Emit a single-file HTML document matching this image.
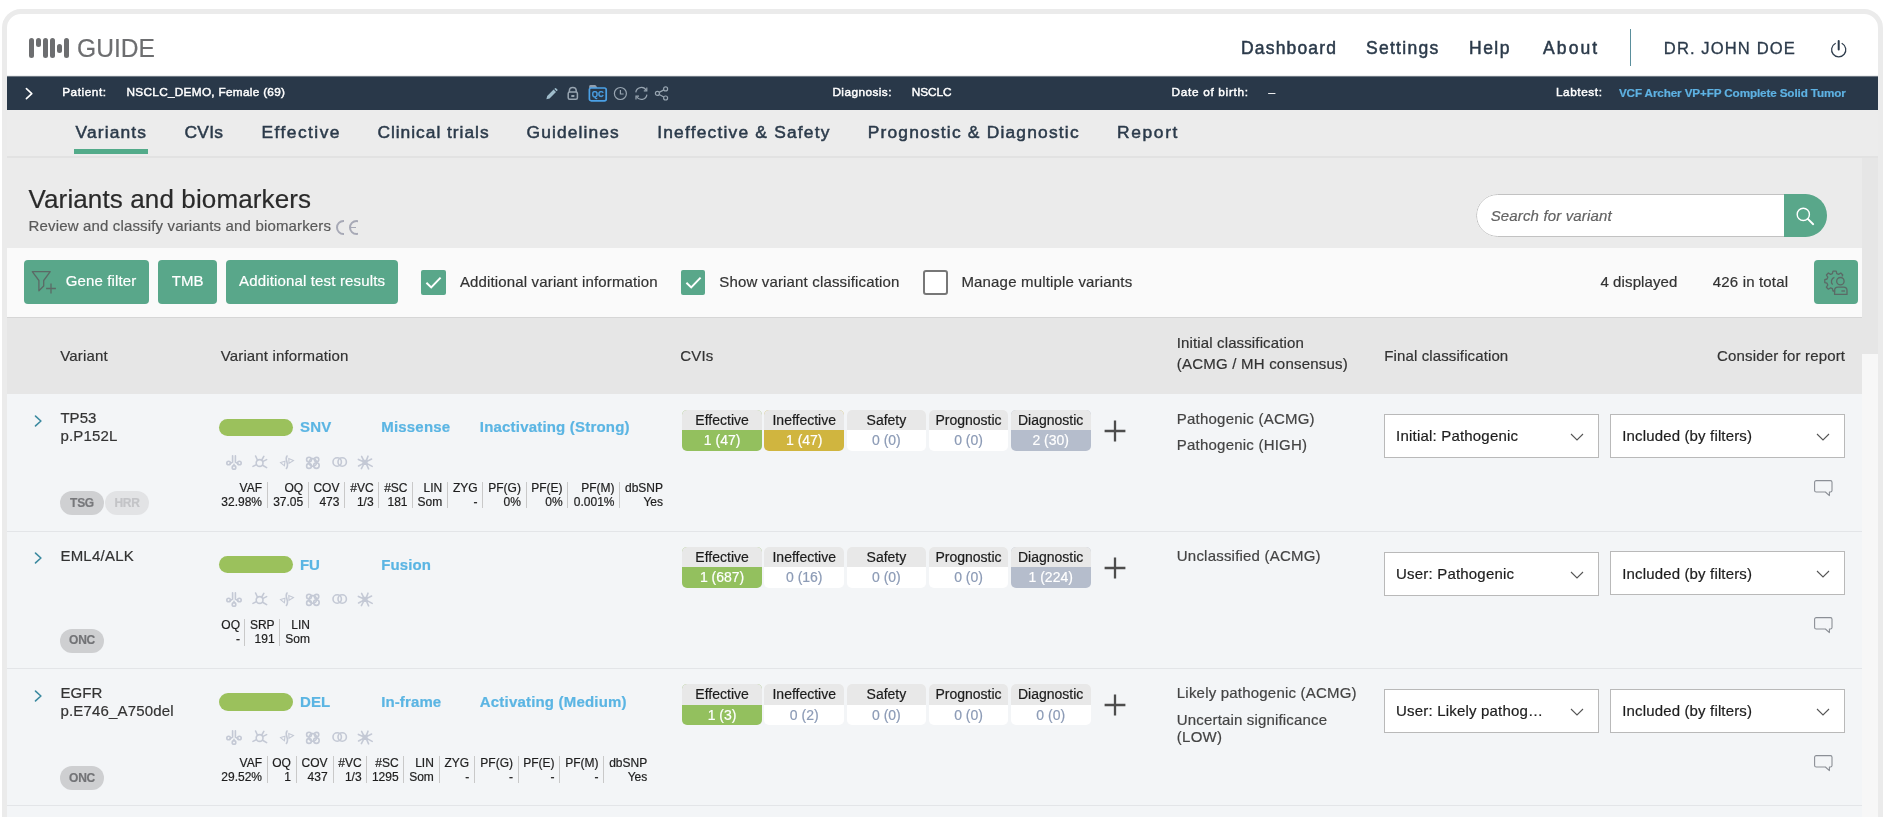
<!DOCTYPE html><html><head><meta charset="utf-8"><title>GUIDE - Variants and biomarkers</title><style>
html,body{margin:0;padding:0;}body{width:1897px;height:817px;overflow:hidden;background:#fff;position:relative;font-family:"Liberation Sans",sans-serif;}
.t{position:absolute;white-space:nowrap;line-height:1;}#w{position:absolute;left:0;top:0;width:1897px;height:817px;overflow:hidden;will-change:transform;}
svg{position:absolute;overflow:visible;}
</style></head><body><div id="w">
<div style="position:absolute;left:2px;top:9px;width:1871px;height:900px;border:5px solid #ebebeb;border-radius:19px;background:#fff;"></div>
<div style="position:absolute;left:7px;top:76px;width:1871px;height:741px;background:#ececec;"></div>
<div style="position:absolute;left:7px;top:76px;width:1871px;height:33.5px;background:#293849;"></div>
<div style="position:absolute;left:7px;top:74.5px;width:1871px;height:2px;background:linear-gradient(#fff,#8a929b);opacity:.55"></div>
<div style="position:absolute;left:7px;top:155.5px;width:1871px;height:2.5px;background:#e2e2e2;"></div>
<div style="position:absolute;left:7px;top:157.5px;width:1855px;height:659.5px;background:#ebebeb;"></div>
<div style="position:absolute;left:1862px;top:157.5px;width:16px;height:659.5px;background:#f7f7f7;"></div>
<div style="position:absolute;left:1862px;top:157.5px;width:16px;height:196.5px;background:#e6e6e6;"></div>
<div style="position:absolute;left:7px;top:248px;width:1855px;height:69px;background:#fafafa;"></div>
<div style="position:absolute;left:7px;top:317px;width:1855px;height:500px;background:#f3f5f7;"></div>
<div style="position:absolute;left:7px;top:317px;width:1855px;height:76.6px;background:#e6e6e6;"></div>
<div style="position:absolute;left:7px;top:316.8px;width:1855px;height:1.4px;background:#d6d6d6;"></div>
<div style="position:absolute;left:7px;top:531px;width:1855px;height:1px;background:#e3e5e8;"></div>
<div style="position:absolute;left:7px;top:668px;width:1855px;height:1px;background:#e3e5e8;"></div>
<div style="position:absolute;left:7px;top:805px;width:1855px;height:1px;background:#e3e5e8;"></div>
<div style="position:absolute;left:29px;top:38.2px;width:5px;height:19.8px;background:#6d6e70;border-radius:2.6px;"></div>
<div style="position:absolute;left:35.8px;top:38.2px;width:5.2px;height:9.2px;background:#6d6e70;border-radius:2.6px;"></div>
<div style="position:absolute;left:43px;top:38.2px;width:5px;height:19.8px;background:#6d6e70;border-radius:2.6px;"></div>
<div style="position:absolute;left:50px;top:38.2px;width:5px;height:19.8px;background:#6d6e70;border-radius:2.6px;"></div>
<div style="position:absolute;left:57px;top:43.7px;width:5px;height:9.2px;background:#6d6e70;border-radius:2.6px;"></div>
<div style="position:absolute;left:63.9px;top:38.2px;width:5.1px;height:19.8px;background:#6d6e70;border-radius:2.6px;"></div>
<div style="position:absolute;left:1630px;top:29.4px;width:1.3px;height:36.9px;background:#5a8f9c;"></div>
<svg style="left:1828px;top:38px" width="22" height="22" viewBox="0 0 22 22"><path d="M7.3 5.5 A7.1 7.1 0 1 0 14.1 5.5" fill="none" stroke="#2f3d4d" stroke-width="1.25" stroke-linecap="round"/><path d="M10.7 3 V11.4" stroke="#2b3a4a" stroke-width="2" stroke-linecap="round"/></svg>
<svg style="left:22.7px;top:85.4px" width="14" height="16" viewBox="0 0 14 16"><path d="M3.4 3.6 L8.8 8.6 L3.4 13.6" fill="none" stroke="#fff" stroke-width="1.6" stroke-linecap="round" stroke-linejoin="round"/></svg>
<svg style="left:545px;top:86.6px" width="14" height="14" viewBox="0 0 14 14"><path d="M1.4 12.2 L2.2 9 L8.6 2.6 L11 5 L4.6 11.4 Z" fill="#9fbccb"/><path d="M9.3 1.9 L10 1.2 Q10.5 0.8 11 1.2 L12.4 2.6 Q12.8 3.1 12.4 3.6 L11.7 4.3 Z" fill="#9fbccb"/></svg>
<svg style="left:566px;top:86px" width="14" height="15" viewBox="0 0 14 15"><rect x="2.2" y="6" width="9.2" height="7.2" rx="1.5" fill="none" stroke="#98a5b1" stroke-width="1.5"/><path d="M3.4 6 V4.6 A3.4 3.2 0 0 1 10.2 4.6 V6" fill="none" stroke="#98a5b1" stroke-width="1.5"/><rect x="5.2" y="9" width="3.2" height="2" rx="0.4" fill="#98a5b1"/></svg>
<svg style="left:588px;top:84px" width="20" height="19" viewBox="0 0 20 19"><path d="M1.2 4.2 V2.4 Q1.2 1 2.6 1 H6.8 Q7.6 1 8 1.6 L9.6 4.2 Z" fill="#929eac"/><rect x="1.4" y="4" width="16.8" height="12.8" rx="1.8" fill="#293849" stroke="#4ba1e6" stroke-width="1.7"/><text x="9.8" y="13.4" font-family="Liberation Sans, sans-serif" font-weight="700" font-size="9.4" fill="#4ba1e6" stroke="#4ba1e6" stroke-width="0.25" text-anchor="middle" textLength="12" lengthAdjust="spacingAndGlyphs">QC</text></svg>
<svg style="left:613px;top:86px" width="15" height="15" viewBox="0 0 15 15"><circle cx="7.4" cy="7.5" r="6" fill="none" stroke="#98a5b1" stroke-width="1.2"/><path d="M7.4 4 V8 H10.6" fill="none" stroke="#98a5b1" stroke-width="1.2"/></svg>
<svg style="left:634px;top:86px" width="15" height="15" viewBox="0 0 15 15"><path d="M1.8 6.4 A5.6 5.6 0 0 1 12.2 4.2" fill="none" stroke="#98a5b1" stroke-width="1.2"/><path d="M12.9 8.6 A5.6 5.6 0 0 1 2.6 10.8" fill="none" stroke="#98a5b1" stroke-width="1.2"/><path d="M12.8 1.6 V4.8 H9.8" fill="none" stroke="#98a5b1" stroke-width="1.2"/><path d="M2 13.4 V10.2 H5" fill="none" stroke="#98a5b1" stroke-width="1.2"/></svg>
<svg style="left:654px;top:86px" width="16" height="15" viewBox="0 0 16 15"><circle cx="3.4" cy="7.4" r="2" fill="none" stroke="#98a5b1" stroke-width="1.2"/><circle cx="11.6" cy="2.9" r="2" fill="none" stroke="#98a5b1" stroke-width="1.2"/><circle cx="11.6" cy="12" r="2" fill="none" stroke="#98a5b1" stroke-width="1.2"/><path d="M5.2 6.4 L9.8 3.9 M5.2 8.4 L9.8 11" stroke="#98a5b1" stroke-width="1.2"/></svg>
<div style="position:absolute;left:73.8px;top:149px;width:73.8px;height:4.8px;background:#53ab8a;"></div>
<div style="position:absolute;left:336px;top:220px;width:8.2px;height:15px;overflow:hidden"><div style="box-sizing:border-box;width:15px;height:15px;border:2px solid #a7a9b6;border-radius:50%"></div></div>
<div style="position:absolute;left:349.4px;top:220px;width:8.2px;height:15px;overflow:hidden"><div style="box-sizing:border-box;width:15px;height:15px;border:2px solid #a7a9b6;border-radius:50%"></div><div style="position:absolute;left:1px;top:6.7px;width:6px;height:1.6px;background:#a7a9b6"></div></div>
<div style="position:absolute;left:1475.7px;top:194.3px;width:351.4px;height:43px;border-radius:21.5px;background:#fff;overflow:hidden"><div style="position:absolute;box-sizing:border-box;left:0;top:0;width:100%;height:100%;border:1px solid #c2c2c2;border-radius:21.5px"></div><div style="position:absolute;right:0;top:0;width:42.8px;height:43px;background:#59a78a"></div></div>
<svg style="left:1794px;top:205px" width="22" height="22" viewBox="0 0 22 22"><circle cx="9.3" cy="9.4" r="6.1" fill="none" stroke="#fff" stroke-width="1.4"/><path d="M13.8 13.9 L19.2 19.2" stroke="#fff" stroke-width="1.9" stroke-linecap="round"/></svg>
<div style="position:absolute;left:23.6px;top:260.4px;width:125.9px;height:43.8px;background:#59a78a;border-radius:4px;"></div>
<div style="position:absolute;left:158px;top:260.4px;width:59px;height:43.8px;background:#59a78a;border-radius:4px;"></div>
<div style="position:absolute;left:225.5px;top:260.4px;width:172.9px;height:43.8px;background:#59a78a;border-radius:4px;"></div>
<svg style="left:30px;top:269px" width="26" height="26" viewBox="0 0 26 26"><path d="M2.3 2.7 H20.2 L13.7 11.5 V17 L8.9 21.7 V11.5 Z" fill="none" stroke="#5b6a66" stroke-width="1.3" stroke-linejoin="round"/><path d="M21 14.6 V24.4 M16.1 19.5 H25.9" stroke="#5b6a66" stroke-width="1.3"/></svg>
<div style="position:absolute;left:421px;top:270px;width:24.5px;height:24.5px;background:#59a78a;border-radius:2px"></div>
<svg style="left:421px;top:270px" width="25" height="25" viewBox="0 0 25 25"><path d="M5.4 12.8 L10.2 17.4 L19.6 7.6" fill="none" stroke="#fff" stroke-width="2"/></svg>
<div style="position:absolute;left:680.9px;top:270px;width:24.5px;height:24.5px;background:#59a78a;border-radius:2px"></div>
<svg style="left:680.9px;top:270px" width="25" height="25" viewBox="0 0 25 25"><path d="M5.4 12.8 L10.2 17.4 L19.6 7.6" fill="none" stroke="#fff" stroke-width="2"/></svg>
<div style="position:absolute;box-sizing:border-box;left:923px;top:270px;width:24.5px;height:24.5px;background:#fff;border:2px solid #777;border-radius:3px"></div>
<div style="position:absolute;left:1814.2px;top:260.3px;width:44.0px;height:43.8px;background:#59a78a;border-radius:4px;"></div>
<svg style="left:1823px;top:268.5px" width="28" height="28" viewBox="0 0 28 28"><g fill="none" stroke="#5b6a66" stroke-width="1.3" stroke-linejoin="round"><path d="M12.2 22 H10 L9.4 19.6 L7.6 18.8 L5.4 20.2 L3.4 18.2 L4.8 16 L4 14.2 L1.8 13.6 V10.6 L4 10 L4.8 8.2 L3.4 6 L5.4 4 L7.6 5.4 L9.4 4.6 L10 2.2 H13.2 L13.8 4.6 L15.6 5.4 L17.8 4 L19.8 6 L18.9 7.4"/><path d="M9.6 15.6 A4.4 4.4 0 0 1 11.4 8.4"/><circle cx="17.4" cy="12.2" r="3.7"/><path d="M11.6 25.4 V21.6 A3.4 3.4 0 0 1 15 18.2 H20.6 A3.4 3.4 0 0 1 24 21.6 V25.4 Z"/><path d="M18.4 22 H22"/></g></svg>
<svg style="left:32px;top:413.0px" width="12" height="16" viewBox="0 0 12 16"><path d="M3.5 3.1 L8.9 8 L3.5 12.9" fill="none" stroke="#3c8aa0" stroke-width="1.6" stroke-linecap="round" stroke-linejoin="round"/></svg>
<div style="position:absolute;left:60px;top:491.3px;width:44px;height:24px;border-radius:12px;background:#cfd0d2"></div>
<div style="position:absolute;left:105px;top:491.3px;width:44px;height:24px;border-radius:12px;background:#e2e3e5"></div>
<div style="position:absolute;left:219.2px;top:418.6px;width:73.6px;height:17.6px;background:#9bc15c;border-radius:9px;"></div>
<svg style="left:226px;top:455.0px" width="148" height="16" viewBox="0 0 148 16"><g fill="none" stroke="#c4c9d5" stroke-width="1.6" stroke-linecap="round"><path d="M6.6 0.8 V7 L4.2 8.6 M9.4 0.8 V7 L11.8 8.6 M8 9.4 V10.6"/><circle cx="2.6" cy="8" r="1.8"/><circle cx="13.4" cy="8" r="1.8"/><circle cx="8" cy="12.4" r="1.8"/><circle cx="33.6" cy="8" r="3.4"/><path d="M31.4 5 L29.6 1 M35.8 5 L37.8 1.4 M30.4 9.6 L27 11.4 M36.6 10.2 L40.6 12.6 M37 6.4 L40.6 4.6"/><path d="M61 1 C58 5 64 9 60.4 13.4"/><path d="M54.6 7.6 L59 6.2 L58.4 10.8 Z M67.4 5.6 L62.8 3.6 L63 8.2 Z" stroke-width="1.1"/><circle cx="86.8" cy="7.4" r="3.8"/><circle cx="83" cy="4.6" r="2.4"/><circle cx="90.6" cy="4.6" r="2.2"/><circle cx="83" cy="11" r="2.4"/><circle cx="90.4" cy="10.6" r="2.8"/><circle cx="111.2" cy="7" r="4.2"/><circle cx="116.2" cy="7" r="4.2"/><path d="M135.6 1.4 L137.6 5.4 M142 1.2 L140.4 5.4 M132.4 4.4 L137 6.4 M145.6 4 L141 6.4 M132.6 11 L137 8.6 M146.2 11.4 L141 8.6 M135.4 13.6 L137.8 9 M142.6 13.8 L140.4 9"/><rect x="137.2" y="5.6" width="3.6" height="3.6" fill="#c4c9d5"/></g></svg>
<div style="position:absolute;left:267.1px;top:481.8px;width:1.0px;height:26.6px;background:#c9c9c9;"></div>
<div style="position:absolute;left:307.8px;top:481.8px;width:1.0px;height:26.6px;background:#c9c9c9;"></div>
<div style="position:absolute;left:344.2px;top:481.8px;width:1.0px;height:26.6px;background:#c9c9c9;"></div>
<div style="position:absolute;left:377.9px;top:481.8px;width:1.0px;height:26.6px;background:#c9c9c9;"></div>
<div style="position:absolute;left:412.0px;top:481.8px;width:1.0px;height:26.6px;background:#c9c9c9;"></div>
<div style="position:absolute;left:447.0px;top:481.8px;width:1.0px;height:26.6px;background:#c9c9c9;"></div>
<div style="position:absolute;left:481.9px;top:481.8px;width:1.0px;height:26.6px;background:#c9c9c9;"></div>
<div style="position:absolute;left:525.5px;top:481.8px;width:1.0px;height:26.6px;background:#c9c9c9;"></div>
<div style="position:absolute;left:567.2px;top:481.8px;width:1.0px;height:26.6px;background:#c9c9c9;"></div>
<div style="position:absolute;left:619.0px;top:481.8px;width:1.0px;height:26.6px;background:#c9c9c9;"></div>
<div style="position:absolute;left:682.2px;top:409.8px;width:79.8px;height:41px;border-radius:5px;overflow:hidden;background:#93c05e"><div style="height:20.4px;background:#e8e8e8"></div></div>
<div style="position:absolute;left:764.35px;top:409.8px;width:79.8px;height:41px;border-radius:5px;overflow:hidden;background:#d0b53f"><div style="height:20.4px;background:#e8e8e8"></div></div>
<div style="position:absolute;left:846.5px;top:409.8px;width:79.8px;height:41px;border-radius:5px;overflow:hidden;background:#ffffff"><div style="height:20.4px;background:#e8e8e8"></div></div>
<div style="position:absolute;left:928.65px;top:409.8px;width:79.8px;height:41px;border-radius:5px;overflow:hidden;background:#ffffff"><div style="height:20.4px;background:#e8e8e8"></div></div>
<div style="position:absolute;left:1010.8px;top:409.8px;width:79.8px;height:41px;border-radius:5px;overflow:hidden;background:#b5bdcc"><div style="height:20.4px;background:#e8e8e8"></div></div>
<svg style="left:1104px;top:419.5px" width="22" height="22" viewBox="0 0 22 22"><path d="M11 0.6 V21.4 M0.6 11 H21.4" stroke="#4d4d4d" stroke-width="2.3"/></svg>
<div style="position:absolute;box-sizing:border-box;left:1383.9px;top:414px;width:215.5px;height:44px;background:#fff;border:1px solid #b9b9b9"></div>
<svg style="left:1569.9px;top:432.4px" width="14" height="10" viewBox="0 0 14 10"><path d="M1 2 L7 8 L13 2" fill="none" stroke="#555" stroke-width="1.1"/></svg>
<div style="position:absolute;box-sizing:border-box;left:1610px;top:414px;width:235px;height:44px;background:#fff;border:1px solid #b9b9b9"></div>
<svg style="left:1815.5px;top:432.4px" width="14" height="10" viewBox="0 0 14 10"><path d="M1 2 L7 8 L13 2" fill="none" stroke="#555" stroke-width="1.1"/></svg>
<svg style="left:1813px;top:479.0px" width="21" height="19" viewBox="0 0 21 19"><path d="M3.2 1.6 H17.4 A1.6 1.6 0 0 1 19 3.2 V11.4 A1.6 1.6 0 0 1 17.4 13 H16.4 V16.6 L12.4 13 H3.2 A1.6 1.6 0 0 1 1.6 11.4 V3.2 A1.6 1.6 0 0 1 3.2 1.6 Z" fill="none" stroke="#8b8f96" stroke-width="1.1" stroke-linejoin="round"/></svg>
<svg style="left:32px;top:550.3px" width="12" height="16" viewBox="0 0 12 16"><path d="M3.5 3.1 L8.9 8 L3.5 12.9" fill="none" stroke="#3c8aa0" stroke-width="1.6" stroke-linecap="round" stroke-linejoin="round"/></svg>
<div style="position:absolute;left:60px;top:628.5999999999999px;width:44px;height:24px;border-radius:12px;background:#cecfd1"></div>
<div style="position:absolute;left:219.2px;top:555.9px;width:73.6px;height:17.6px;background:#9bc15c;border-radius:9px;"></div>
<svg style="left:226px;top:592.3px" width="148" height="16" viewBox="0 0 148 16"><g fill="none" stroke="#c4c9d5" stroke-width="1.6" stroke-linecap="round"><path d="M6.6 0.8 V7 L4.2 8.6 M9.4 0.8 V7 L11.8 8.6 M8 9.4 V10.6"/><circle cx="2.6" cy="8" r="1.8"/><circle cx="13.4" cy="8" r="1.8"/><circle cx="8" cy="12.4" r="1.8"/><circle cx="33.6" cy="8" r="3.4"/><path d="M31.4 5 L29.6 1 M35.8 5 L37.8 1.4 M30.4 9.6 L27 11.4 M36.6 10.2 L40.6 12.6 M37 6.4 L40.6 4.6"/><path d="M61 1 C58 5 64 9 60.4 13.4"/><path d="M54.6 7.6 L59 6.2 L58.4 10.8 Z M67.4 5.6 L62.8 3.6 L63 8.2 Z" stroke-width="1.1"/><circle cx="86.8" cy="7.4" r="3.8"/><circle cx="83" cy="4.6" r="2.4"/><circle cx="90.6" cy="4.6" r="2.2"/><circle cx="83" cy="11" r="2.4"/><circle cx="90.4" cy="10.6" r="2.8"/><circle cx="111.2" cy="7" r="4.2"/><circle cx="116.2" cy="7" r="4.2"/><path d="M135.6 1.4 L137.6 5.4 M142 1.2 L140.4 5.4 M132.4 4.4 L137 6.4 M145.6 4 L141 6.4 M132.6 11 L137 8.6 M146.2 11.4 L141 8.6 M135.4 13.6 L137.8 9 M142.6 13.8 L140.4 9"/><rect x="137.2" y="5.6" width="3.6" height="3.6" fill="#c4c9d5"/></g></svg>
<div style="position:absolute;left:244.3px;top:619.0999999999999px;width:1.0px;height:26.6px;background:#c9c9c9;"></div>
<div style="position:absolute;left:279.3px;top:619.0999999999999px;width:1.0px;height:26.6px;background:#c9c9c9;"></div>
<div style="position:absolute;left:682.2px;top:547.0999999999999px;width:79.8px;height:41px;border-radius:5px;overflow:hidden;background:#93c05e"><div style="height:20.4px;background:#e8e8e8"></div></div>
<div style="position:absolute;left:764.35px;top:547.0999999999999px;width:79.8px;height:41px;border-radius:5px;overflow:hidden;background:#ffffff"><div style="height:20.4px;background:#e8e8e8"></div></div>
<div style="position:absolute;left:846.5px;top:547.0999999999999px;width:79.8px;height:41px;border-radius:5px;overflow:hidden;background:#ffffff"><div style="height:20.4px;background:#e8e8e8"></div></div>
<div style="position:absolute;left:928.65px;top:547.0999999999999px;width:79.8px;height:41px;border-radius:5px;overflow:hidden;background:#ffffff"><div style="height:20.4px;background:#e8e8e8"></div></div>
<div style="position:absolute;left:1010.8px;top:547.0999999999999px;width:79.8px;height:41px;border-radius:5px;overflow:hidden;background:#b5bdcc"><div style="height:20.4px;background:#e8e8e8"></div></div>
<svg style="left:1104px;top:556.8px" width="22" height="22" viewBox="0 0 22 22"><path d="M11 0.6 V21.4 M0.6 11 H21.4" stroke="#4d4d4d" stroke-width="2.3"/></svg>
<div style="position:absolute;box-sizing:border-box;left:1383.9px;top:552px;width:215.5px;height:44px;background:#fff;border:1px solid #b9b9b9"></div>
<svg style="left:1569.9px;top:570.4px" width="14" height="10" viewBox="0 0 14 10"><path d="M1 2 L7 8 L13 2" fill="none" stroke="#555" stroke-width="1.1"/></svg>
<div style="position:absolute;box-sizing:border-box;left:1610px;top:551px;width:235px;height:44px;background:#fff;border:1px solid #b9b9b9"></div>
<svg style="left:1815.5px;top:569.4px" width="14" height="10" viewBox="0 0 14 10"><path d="M1 2 L7 8 L13 2" fill="none" stroke="#555" stroke-width="1.1"/></svg>
<svg style="left:1813px;top:616.3px" width="21" height="19" viewBox="0 0 21 19"><path d="M3.2 1.6 H17.4 A1.6 1.6 0 0 1 19 3.2 V11.4 A1.6 1.6 0 0 1 17.4 13 H16.4 V16.6 L12.4 13 H3.2 A1.6 1.6 0 0 1 1.6 11.4 V3.2 A1.6 1.6 0 0 1 3.2 1.6 Z" fill="none" stroke="#8b8f96" stroke-width="1.1" stroke-linejoin="round"/></svg>
<svg style="left:32px;top:687.6px" width="12" height="16" viewBox="0 0 12 16"><path d="M3.5 3.1 L8.9 8 L3.5 12.9" fill="none" stroke="#3c8aa0" stroke-width="1.6" stroke-linecap="round" stroke-linejoin="round"/></svg>
<div style="position:absolute;left:60px;top:765.9000000000001px;width:44px;height:24px;border-radius:12px;background:#cecfd1"></div>
<div style="position:absolute;left:219.2px;top:693.2px;width:73.6px;height:17.6px;background:#9bc15c;border-radius:9px;"></div>
<svg style="left:226px;top:729.6px" width="148" height="16" viewBox="0 0 148 16"><g fill="none" stroke="#c4c9d5" stroke-width="1.6" stroke-linecap="round"><path d="M6.6 0.8 V7 L4.2 8.6 M9.4 0.8 V7 L11.8 8.6 M8 9.4 V10.6"/><circle cx="2.6" cy="8" r="1.8"/><circle cx="13.4" cy="8" r="1.8"/><circle cx="8" cy="12.4" r="1.8"/><circle cx="33.6" cy="8" r="3.4"/><path d="M31.4 5 L29.6 1 M35.8 5 L37.8 1.4 M30.4 9.6 L27 11.4 M36.6 10.2 L40.6 12.6 M37 6.4 L40.6 4.6"/><path d="M61 1 C58 5 64 9 60.4 13.4"/><path d="M54.6 7.6 L59 6.2 L58.4 10.8 Z M67.4 5.6 L62.8 3.6 L63 8.2 Z" stroke-width="1.1"/><circle cx="86.8" cy="7.4" r="3.8"/><circle cx="83" cy="4.6" r="2.4"/><circle cx="90.6" cy="4.6" r="2.2"/><circle cx="83" cy="11" r="2.4"/><circle cx="90.4" cy="10.6" r="2.8"/><circle cx="111.2" cy="7" r="4.2"/><circle cx="116.2" cy="7" r="4.2"/><path d="M135.6 1.4 L137.6 5.4 M142 1.2 L140.4 5.4 M132.4 4.4 L137 6.4 M145.6 4 L141 6.4 M132.6 11 L137 8.6 M146.2 11.4 L141 8.6 M135.4 13.6 L137.8 9 M142.6 13.8 L140.4 9"/><rect x="137.2" y="5.6" width="3.6" height="3.6" fill="#c4c9d5"/></g></svg>
<div style="position:absolute;left:267.1px;top:756.4000000000001px;width:1.0px;height:26.6px;background:#c9c9c9;"></div>
<div style="position:absolute;left:295.5px;top:756.4000000000001px;width:1.0px;height:26.6px;background:#c9c9c9;"></div>
<div style="position:absolute;left:332.5px;top:756.4000000000001px;width:1.0px;height:26.6px;background:#c9c9c9;"></div>
<div style="position:absolute;left:365.9px;top:756.4000000000001px;width:1.0px;height:26.6px;background:#c9c9c9;"></div>
<div style="position:absolute;left:403.1px;top:756.4000000000001px;width:1.0px;height:26.6px;background:#c9c9c9;"></div>
<div style="position:absolute;left:438.7px;top:756.4000000000001px;width:1.0px;height:26.6px;background:#c9c9c9;"></div>
<div style="position:absolute;left:473.9px;top:756.4000000000001px;width:1.0px;height:26.6px;background:#c9c9c9;"></div>
<div style="position:absolute;left:517.5px;top:756.4000000000001px;width:1.0px;height:26.6px;background:#c9c9c9;"></div>
<div style="position:absolute;left:559.1px;top:756.4000000000001px;width:1.0px;height:26.6px;background:#c9c9c9;"></div>
<div style="position:absolute;left:603.1px;top:756.4000000000001px;width:1.0px;height:26.6px;background:#c9c9c9;"></div>
<div style="position:absolute;left:682.2px;top:684.4000000000001px;width:79.8px;height:41px;border-radius:5px;overflow:hidden;background:#93c05e"><div style="height:20.4px;background:#e8e8e8"></div></div>
<div style="position:absolute;left:764.35px;top:684.4000000000001px;width:79.8px;height:41px;border-radius:5px;overflow:hidden;background:#ffffff"><div style="height:20.4px;background:#e8e8e8"></div></div>
<div style="position:absolute;left:846.5px;top:684.4000000000001px;width:79.8px;height:41px;border-radius:5px;overflow:hidden;background:#ffffff"><div style="height:20.4px;background:#e8e8e8"></div></div>
<div style="position:absolute;left:928.65px;top:684.4000000000001px;width:79.8px;height:41px;border-radius:5px;overflow:hidden;background:#ffffff"><div style="height:20.4px;background:#e8e8e8"></div></div>
<div style="position:absolute;left:1010.8px;top:684.4000000000001px;width:79.8px;height:41px;border-radius:5px;overflow:hidden;background:#ffffff"><div style="height:20.4px;background:#e8e8e8"></div></div>
<svg style="left:1104px;top:694.1px" width="22" height="22" viewBox="0 0 22 22"><path d="M11 0.6 V21.4 M0.6 11 H21.4" stroke="#4d4d4d" stroke-width="2.3"/></svg>
<div style="position:absolute;box-sizing:border-box;left:1383.9px;top:689px;width:215.5px;height:44px;background:#fff;border:1px solid #b9b9b9"></div>
<svg style="left:1569.9px;top:707.4px" width="14" height="10" viewBox="0 0 14 10"><path d="M1 2 L7 8 L13 2" fill="none" stroke="#555" stroke-width="1.1"/></svg>
<div style="position:absolute;box-sizing:border-box;left:1610px;top:689px;width:235px;height:44px;background:#fff;border:1px solid #b9b9b9"></div>
<svg style="left:1815.5px;top:707.4px" width="14" height="10" viewBox="0 0 14 10"><path d="M1 2 L7 8 L13 2" fill="none" stroke="#555" stroke-width="1.1"/></svg>
<svg style="left:1813px;top:753.6px" width="21" height="19" viewBox="0 0 21 19"><path d="M3.2 1.6 H17.4 A1.6 1.6 0 0 1 19 3.2 V11.4 A1.6 1.6 0 0 1 17.4 13 H16.4 V16.6 L12.4 13 H3.2 A1.6 1.6 0 0 1 1.6 11.4 V3.2 A1.6 1.6 0 0 1 3.2 1.6 Z" fill="none" stroke="#8b8f96" stroke-width="1.1" stroke-linejoin="round"/></svg>
<span class="t" style="top:35.48px;font-size:26.6px;color:#6d6e70;left:76.6px;-webkit-text-stroke:0.2px #6d6e70;transform:scaleX(.925);transform-origin:0 0;">GUIDE</span>
<span class="t" style="top:40.49px;font-size:17.5px;color:#2b3a4a;left:1241px;letter-spacing:1.172px;-webkit-text-stroke:0.5px #2b3a4a;">Dashboard</span>
<span class="t" style="top:40.49px;font-size:17.5px;color:#2b3a4a;left:1366px;letter-spacing:1.281px;-webkit-text-stroke:0.5px #2b3a4a;">Settings</span>
<span class="t" style="top:40.49px;font-size:17.5px;color:#2b3a4a;left:1469px;letter-spacing:1.5px;-webkit-text-stroke:0.5px #2b3a4a;">Help</span>
<span class="t" style="top:40.49px;font-size:17.5px;color:#2b3a4a;left:1543px;letter-spacing:2.116px;-webkit-text-stroke:0.5px #2b3a4a;">About</span>
<span class="t" style="top:41.05px;font-size:16.6px;color:#2b3a4a;left:1663.8px;letter-spacing:1.097px;-webkit-text-stroke:0.3px #2b3a4a;">DR. JOHN DOE</span>
<span class="t" style="top:86.61px;font-size:11.8px;color:#fff;left:62.2px;letter-spacing:0.541px;-webkit-text-stroke:0.45px #fff;">Patient:</span>
<span class="t" style="top:86.61px;font-size:11.8px;color:#fff;left:126.5px;letter-spacing:0.291px;-webkit-text-stroke:0.45px #fff;">NSCLC_DEMO, Female (69)</span>
<span class="t" style="top:86.61px;font-size:11.8px;color:#fff;left:832.4px;letter-spacing:0.445px;-webkit-text-stroke:0.45px #fff;">Diagnosis:</span>
<span class="t" style="top:86.61px;font-size:11.8px;color:#fff;left:911.8px;letter-spacing:-0.05px;-webkit-text-stroke:0.45px #fff;">NSCLC</span>
<span class="t" style="top:86.61px;font-size:11.8px;color:#fff;left:1171.6px;letter-spacing:0.681px;-webkit-text-stroke:0.45px #fff;">Date of birth:</span>
<span class="t" style="top:86.61px;font-size:11.8px;color:#fff;left:1268.6px;-webkit-text-stroke:0.45px #fff;">–</span>
<span class="t" style="top:86.61px;font-size:11.8px;color:#fff;left:1555.9px;letter-spacing:0.588px;-webkit-text-stroke:0.45px #fff;">Labtest:</span>
<span class="t" style="top:87.1px;font-size:11.7px;color:#5eb2e3;font-weight:700;left:1618.9px;letter-spacing:-0.123px;-webkit-text-stroke:0.2px #5eb2e3;">VCF Archer VP+FP Complete Solid Tumor</span>
<span class="t" style="top:124.37px;font-size:17.4px;color:#2b3a4a;left:75.5px;letter-spacing:1.141px;-webkit-text-stroke:0.5px #2b3a4a;">Variants</span>
<span class="t" style="top:124.37px;font-size:17.4px;color:#2b3a4a;left:184.5px;letter-spacing:0.238px;-webkit-text-stroke:0.5px #2b3a4a;">CVIs</span>
<span class="t" style="top:124.37px;font-size:17.4px;color:#2b3a4a;left:261.5px;letter-spacing:1.451px;-webkit-text-stroke:0.5px #2b3a4a;">Effective</span>
<span class="t" style="top:124.37px;font-size:17.4px;color:#2b3a4a;left:377.4px;letter-spacing:0.971px;-webkit-text-stroke:0.5px #2b3a4a;">Clinical trials</span>
<span class="t" style="top:124.37px;font-size:17.4px;color:#2b3a4a;left:526.5px;letter-spacing:1.113px;-webkit-text-stroke:0.5px #2b3a4a;">Guidelines</span>
<span class="t" style="top:124.37px;font-size:17.4px;color:#2b3a4a;left:657.2px;letter-spacing:1.198px;-webkit-text-stroke:0.5px #2b3a4a;">Ineffective &amp; Safety</span>
<span class="t" style="top:124.37px;font-size:17.4px;color:#2b3a4a;left:867.7px;letter-spacing:1.194px;-webkit-text-stroke:0.5px #2b3a4a;">Prognostic &amp; Diagnostic</span>
<span class="t" style="top:124.37px;font-size:17.4px;color:#2b3a4a;left:1117px;letter-spacing:1.639px;-webkit-text-stroke:0.5px #2b3a4a;">Report</span>
<span class="t" style="top:185.79px;font-size:26px;color:#2a2a2a;left:28.5px;letter-spacing:0.119px;-webkit-text-stroke:0.2px #2a2a2a;">Variants and biomarkers</span>
<span class="t" style="top:218.4px;font-size:15px;color:#595959;left:28.5px;letter-spacing:0.156px;-webkit-text-stroke:0.2px #595959;">Review and classify variants and biomarkers</span>
<span class="t" style="top:208.3px;font-size:15px;color:#636363;left:1490.7px;letter-spacing:0.148px;-webkit-text-stroke:0.2px #636363;font-style:italic;">Search for variant</span>
<span class="t" style="top:272.8px;font-size:15px;color:#fff;left:65.8px;letter-spacing:0.12px;-webkit-text-stroke:0.2px #fff;">Gene filter</span>
<span class="t" style="top:272.8px;font-size:15px;color:#fff;left:171.8px;letter-spacing:0.064px;-webkit-text-stroke:0.2px #fff;">TMB</span>
<span class="t" style="top:272.8px;font-size:15px;color:#fff;left:239px;letter-spacing:0.156px;-webkit-text-stroke:0.2px #fff;">Additional test results</span>
<span class="t" style="top:273.9px;font-size:15px;color:#333;left:459.9px;letter-spacing:0.15px;-webkit-text-stroke:0.2px #333;">Additional variant information</span>
<span class="t" style="top:273.9px;font-size:15px;color:#333;left:719.3px;letter-spacing:0.161px;-webkit-text-stroke:0.2px #333;">Show variant classification</span>
<span class="t" style="top:273.9px;font-size:15px;color:#333;left:961.4px;letter-spacing:0.175px;-webkit-text-stroke:0.2px #333;">Manage multiple variants</span>
<span class="t" style="top:274.2px;font-size:15px;color:#333;left:1600.4px;letter-spacing:0.111px;-webkit-text-stroke:0.2px #333;">4 displayed</span>
<span class="t" style="top:274.2px;font-size:15px;color:#333;left:1712.8px;letter-spacing:0.164px;-webkit-text-stroke:0.2px #333;">426 in total</span>
<span class="t" style="top:348.2px;font-size:15px;color:#333;left:60.2px;letter-spacing:0.18px;-webkit-text-stroke:0.2px #333;">Variant</span>
<span class="t" style="top:348.2px;font-size:15px;color:#333;left:220.7px;letter-spacing:0.156px;-webkit-text-stroke:0.2px #333;">Variant information</span>
<span class="t" style="top:348.2px;font-size:15px;color:#333;left:680.3px;letter-spacing:0.128px;-webkit-text-stroke:0.2px #333;">CVIs</span>
<span class="t" style="top:334.9px;font-size:15px;color:#333;left:1176.8px;letter-spacing:0.132px;-webkit-text-stroke:0.2px #333;">Initial classification</span>
<span class="t" style="top:356.1px;font-size:15px;color:#333;left:1176.8px;letter-spacing:0.215px;-webkit-text-stroke:0.2px #333;">(ACMG / MH consensus)</span>
<span class="t" style="top:348.2px;font-size:15px;color:#333;left:1384.3px;letter-spacing:0.115px;-webkit-text-stroke:0.2px #333;">Final classification</span>
<span class="t" style="top:348.2px;font-size:15px;color:#333;left:1717px;letter-spacing:0.163px;-webkit-text-stroke:0.2px #333;">Consider for report</span>
<span class="t" style="top:410.3px;font-size:15px;color:#333;left:60.4px;letter-spacing:0.047px;-webkit-text-stroke:0.2px #333;">TP53</span>
<span class="t" style="top:428.3px;font-size:15px;color:#333;left:60.4px;letter-spacing:0.185px;-webkit-text-stroke:0.2px #333;">p.P152L</span>
<span class="t" style="top:497.04px;font-size:12px;color:#77787b;font-weight:700;-webkit-text-stroke:0.2px #77787b;left:60px;width:44px;text-align:center;letter-spacing:-0.3px;">TSG</span>
<span class="t" style="top:497.04px;font-size:12px;color:#c3c4c7;font-weight:700;-webkit-text-stroke:0.2px #c3c4c7;left:105px;width:44px;text-align:center;letter-spacing:-0.3px;">HRR</span>
<span class="t" style="top:419.2px;font-size:15px;color:#5bb5e3;font-weight:700;left:300px;letter-spacing:0.228px;-webkit-text-stroke:0.2px #5bb5e3;">SNV</span>
<span class="t" style="top:419.2px;font-size:15px;color:#5bb5e3;font-weight:700;left:381.2px;letter-spacing:0.208px;-webkit-text-stroke:0.2px #5bb5e3;">Missense</span>
<span class="t" style="top:419.2px;font-size:15px;color:#5bb5e3;font-weight:700;left:479.8px;letter-spacing:0.193px;-webkit-text-stroke:0.2px #5bb5e3;">Inactivating (Strong)</span>
<span class="t" style="top:482.04px;font-size:12px;color:#1e1e1e;right:1635px;-webkit-text-stroke:0.2px #1e1e1e;">VAF</span>
<span class="t" style="top:495.94px;font-size:12px;color:#1e1e1e;right:1635px;-webkit-text-stroke:0.2px #1e1e1e;">32.98%</span>
<span class="t" style="top:482.04px;font-size:12px;color:#1e1e1e;right:1593.8px;-webkit-text-stroke:0.2px #1e1e1e;">OQ</span>
<span class="t" style="top:495.94px;font-size:12px;color:#1e1e1e;right:1593.8px;-webkit-text-stroke:0.2px #1e1e1e;">37.05</span>
<span class="t" style="top:482.04px;font-size:12px;color:#1e1e1e;right:1557.6px;-webkit-text-stroke:0.2px #1e1e1e;">COV</span>
<span class="t" style="top:495.94px;font-size:12px;color:#1e1e1e;right:1557.6px;-webkit-text-stroke:0.2px #1e1e1e;">473</span>
<span class="t" style="top:482.04px;font-size:12px;color:#1e1e1e;right:1523.4px;-webkit-text-stroke:0.2px #1e1e1e;">#VC</span>
<span class="t" style="top:495.94px;font-size:12px;color:#1e1e1e;right:1523.4px;-webkit-text-stroke:0.2px #1e1e1e;">1/3</span>
<span class="t" style="top:482.04px;font-size:12px;color:#1e1e1e;right:1489.5px;-webkit-text-stroke:0.2px #1e1e1e;">#SC</span>
<span class="t" style="top:495.94px;font-size:12px;color:#1e1e1e;right:1489.5px;-webkit-text-stroke:0.2px #1e1e1e;">181</span>
<span class="t" style="top:482.04px;font-size:12px;color:#1e1e1e;right:1454.8px;-webkit-text-stroke:0.2px #1e1e1e;">LIN</span>
<span class="t" style="top:495.94px;font-size:12px;color:#1e1e1e;right:1454.8px;-webkit-text-stroke:0.2px #1e1e1e;">Som</span>
<span class="t" style="top:482.04px;font-size:12px;color:#1e1e1e;right:1419.4px;-webkit-text-stroke:0.2px #1e1e1e;">ZYG</span>
<span class="t" style="top:495.94px;font-size:12px;color:#1e1e1e;right:1419.4px;-webkit-text-stroke:0.2px #1e1e1e;">-</span>
<span class="t" style="top:482.04px;font-size:12px;color:#1e1e1e;right:1376.1px;-webkit-text-stroke:0.2px #1e1e1e;">PF(G)</span>
<span class="t" style="top:495.94px;font-size:12px;color:#1e1e1e;right:1376.1px;-webkit-text-stroke:0.2px #1e1e1e;">0%</span>
<span class="t" style="top:482.04px;font-size:12px;color:#1e1e1e;right:1334.4px;-webkit-text-stroke:0.2px #1e1e1e;">PF(E)</span>
<span class="t" style="top:495.94px;font-size:12px;color:#1e1e1e;right:1334.4px;-webkit-text-stroke:0.2px #1e1e1e;">0%</span>
<span class="t" style="top:482.04px;font-size:12px;color:#1e1e1e;right:1282.5px;-webkit-text-stroke:0.2px #1e1e1e;">PF(M)</span>
<span class="t" style="top:495.94px;font-size:12px;color:#1e1e1e;right:1282.5px;-webkit-text-stroke:0.2px #1e1e1e;">0.001%</span>
<span class="t" style="top:482.04px;font-size:12px;color:#1e1e1e;right:1234px;-webkit-text-stroke:0.2px #1e1e1e;">dbSNP</span>
<span class="t" style="top:495.94px;font-size:12px;color:#1e1e1e;right:1234px;-webkit-text-stroke:0.2px #1e1e1e;">Yes</span>
<span class="t" style="top:412.85px;font-size:14px;color:#1c1c1c;-webkit-text-stroke:0.2px #1c1c1c;left:682.2px;width:79.8px;text-align:center;">Effective</span>
<span class="t" style="top:433.05px;font-size:14px;color:#fff;-webkit-text-stroke:0.2px #fff;left:682.2px;width:79.8px;text-align:center;">1 (47)</span>
<span class="t" style="top:412.85px;font-size:14px;color:#1c1c1c;-webkit-text-stroke:0.2px #1c1c1c;left:764.35px;width:79.8px;text-align:center;">Ineffective</span>
<span class="t" style="top:433.05px;font-size:14px;color:#fff;-webkit-text-stroke:0.2px #fff;left:764.35px;width:79.8px;text-align:center;">1 (47)</span>
<span class="t" style="top:412.85px;font-size:14px;color:#1c1c1c;-webkit-text-stroke:0.2px #1c1c1c;left:846.5px;width:79.8px;text-align:center;">Safety</span>
<span class="t" style="top:433.05px;font-size:14px;color:#8c9bb6;-webkit-text-stroke:0.2px #8c9bb6;left:846.5px;width:79.8px;text-align:center;">0 (0)</span>
<span class="t" style="top:412.85px;font-size:14px;color:#1c1c1c;-webkit-text-stroke:0.2px #1c1c1c;left:928.65px;width:79.8px;text-align:center;">Prognostic</span>
<span class="t" style="top:433.05px;font-size:14px;color:#8c9bb6;-webkit-text-stroke:0.2px #8c9bb6;left:928.65px;width:79.8px;text-align:center;">0 (0)</span>
<span class="t" style="top:412.85px;font-size:14px;color:#1c1c1c;-webkit-text-stroke:0.2px #1c1c1c;left:1010.8px;width:79.8px;text-align:center;">Diagnostic</span>
<span class="t" style="top:433.05px;font-size:14px;color:#fff;-webkit-text-stroke:0.2px #fff;left:1010.8px;width:79.8px;text-align:center;">2 (30)</span>
<span class="t" style="top:410.7px;font-size:15px;color:#444;left:1176.8px;letter-spacing:0.224px;-webkit-text-stroke:0.2px #444;">Pathogenic (ACMG)</span>
<span class="t" style="top:436.7px;font-size:15px;color:#444;left:1176.8px;letter-spacing:0.218px;-webkit-text-stroke:0.2px #444;">Pathogenic (HIGH)</span>
<span class="t" style="top:428.3px;font-size:15px;color:#1d1d1d;left:1396.1000000000001px;letter-spacing:0.193px;-webkit-text-stroke:0.2px #1d1d1d;">Initial: Pathogenic</span>
<span class="t" style="top:428.3px;font-size:15px;color:#1d1d1d;left:1622.2px;letter-spacing:0.154px;-webkit-text-stroke:0.2px #1d1d1d;">Included (by filters)</span>
<span class="t" style="top:547.6px;font-size:15px;color:#333;left:60.4px;letter-spacing:0.24px;-webkit-text-stroke:0.2px #333;">EML4/ALK</span>
<span class="t" style="top:634.34px;font-size:12px;color:#727376;font-weight:700;-webkit-text-stroke:0.2px #727376;left:60px;width:44px;text-align:center;letter-spacing:-0.3px;">ONC</span>
<span class="t" style="top:556.5px;font-size:15px;color:#5bb5e3;font-weight:700;left:300px;letter-spacing:-0.2px;-webkit-text-stroke:0.2px #5bb5e3;">FU</span>
<span class="t" style="top:556.5px;font-size:15px;color:#5bb5e3;font-weight:700;left:381.2px;letter-spacing:0.126px;-webkit-text-stroke:0.2px #5bb5e3;">Fusion</span>
<span class="t" style="top:619.34px;font-size:12px;color:#1e1e1e;right:1657px;-webkit-text-stroke:0.2px #1e1e1e;">OQ</span>
<span class="t" style="top:633.24px;font-size:12px;color:#1e1e1e;right:1657px;-webkit-text-stroke:0.2px #1e1e1e;">-</span>
<span class="t" style="top:619.34px;font-size:12px;color:#1e1e1e;right:1622.4px;-webkit-text-stroke:0.2px #1e1e1e;">SRP</span>
<span class="t" style="top:633.24px;font-size:12px;color:#1e1e1e;right:1622.4px;-webkit-text-stroke:0.2px #1e1e1e;">191</span>
<span class="t" style="top:619.34px;font-size:12px;color:#1e1e1e;right:1587px;-webkit-text-stroke:0.2px #1e1e1e;">LIN</span>
<span class="t" style="top:633.24px;font-size:12px;color:#1e1e1e;right:1587px;-webkit-text-stroke:0.2px #1e1e1e;">Som</span>
<span class="t" style="top:550.15px;font-size:14px;color:#1c1c1c;-webkit-text-stroke:0.2px #1c1c1c;left:682.2px;width:79.8px;text-align:center;">Effective</span>
<span class="t" style="top:570.35px;font-size:14px;color:#fff;-webkit-text-stroke:0.2px #fff;left:682.2px;width:79.8px;text-align:center;">1 (687)</span>
<span class="t" style="top:550.15px;font-size:14px;color:#1c1c1c;-webkit-text-stroke:0.2px #1c1c1c;left:764.35px;width:79.8px;text-align:center;">Ineffective</span>
<span class="t" style="top:570.35px;font-size:14px;color:#8c9bb6;-webkit-text-stroke:0.2px #8c9bb6;left:764.35px;width:79.8px;text-align:center;">0 (16)</span>
<span class="t" style="top:550.15px;font-size:14px;color:#1c1c1c;-webkit-text-stroke:0.2px #1c1c1c;left:846.5px;width:79.8px;text-align:center;">Safety</span>
<span class="t" style="top:570.35px;font-size:14px;color:#8c9bb6;-webkit-text-stroke:0.2px #8c9bb6;left:846.5px;width:79.8px;text-align:center;">0 (0)</span>
<span class="t" style="top:550.15px;font-size:14px;color:#1c1c1c;-webkit-text-stroke:0.2px #1c1c1c;left:928.65px;width:79.8px;text-align:center;">Prognostic</span>
<span class="t" style="top:570.35px;font-size:14px;color:#8c9bb6;-webkit-text-stroke:0.2px #8c9bb6;left:928.65px;width:79.8px;text-align:center;">0 (0)</span>
<span class="t" style="top:550.15px;font-size:14px;color:#1c1c1c;-webkit-text-stroke:0.2px #1c1c1c;left:1010.8px;width:79.8px;text-align:center;">Diagnostic</span>
<span class="t" style="top:570.35px;font-size:14px;color:#fff;-webkit-text-stroke:0.2px #fff;left:1010.8px;width:79.8px;text-align:center;">1 (224)</span>
<span class="t" style="top:548.0px;font-size:15px;color:#444;left:1176.8px;letter-spacing:0.209px;-webkit-text-stroke:0.2px #444;">Unclassified (ACMG)</span>
<span class="t" style="top:565.6px;font-size:15px;color:#1d1d1d;left:1396.1000000000001px;letter-spacing:0.188px;-webkit-text-stroke:0.2px #1d1d1d;">User: Pathogenic</span>
<span class="t" style="top:565.6px;font-size:15px;color:#1d1d1d;left:1622.2px;letter-spacing:0.154px;-webkit-text-stroke:0.2px #1d1d1d;">Included (by filters)</span>
<span class="t" style="top:684.9px;font-size:15px;color:#333;left:60.4px;letter-spacing:0.109px;-webkit-text-stroke:0.2px #333;">EGFR</span>
<span class="t" style="top:702.9px;font-size:15px;color:#333;left:60.4px;letter-spacing:0.174px;-webkit-text-stroke:0.2px #333;">p.E746_A750del</span>
<span class="t" style="top:771.64px;font-size:12px;color:#727376;font-weight:700;-webkit-text-stroke:0.2px #727376;left:60px;width:44px;text-align:center;letter-spacing:-0.3px;">ONC</span>
<span class="t" style="top:693.8px;font-size:15px;color:#5bb5e3;font-weight:700;left:300px;letter-spacing:0.1px;-webkit-text-stroke:0.2px #5bb5e3;">DEL</span>
<span class="t" style="top:693.8px;font-size:15px;color:#5bb5e3;font-weight:700;left:381.2px;letter-spacing:0.116px;-webkit-text-stroke:0.2px #5bb5e3;">In-frame</span>
<span class="t" style="top:693.8px;font-size:15px;color:#5bb5e3;font-weight:700;left:479.8px;letter-spacing:0.192px;-webkit-text-stroke:0.2px #5bb5e3;">Activating (Medium)</span>
<span class="t" style="top:756.64px;font-size:12px;color:#1e1e1e;right:1635px;-webkit-text-stroke:0.2px #1e1e1e;">VAF</span>
<span class="t" style="top:770.54px;font-size:12px;color:#1e1e1e;right:1635px;-webkit-text-stroke:0.2px #1e1e1e;">29.52%</span>
<span class="t" style="top:756.64px;font-size:12px;color:#1e1e1e;right:1606.2px;-webkit-text-stroke:0.2px #1e1e1e;">OQ</span>
<span class="t" style="top:770.54px;font-size:12px;color:#1e1e1e;right:1606.2px;-webkit-text-stroke:0.2px #1e1e1e;">1</span>
<span class="t" style="top:756.64px;font-size:12px;color:#1e1e1e;right:1569.4px;-webkit-text-stroke:0.2px #1e1e1e;">COV</span>
<span class="t" style="top:770.54px;font-size:12px;color:#1e1e1e;right:1569.4px;-webkit-text-stroke:0.2px #1e1e1e;">437</span>
<span class="t" style="top:756.64px;font-size:12px;color:#1e1e1e;right:1535.4px;-webkit-text-stroke:0.2px #1e1e1e;">#VC</span>
<span class="t" style="top:770.54px;font-size:12px;color:#1e1e1e;right:1535.4px;-webkit-text-stroke:0.2px #1e1e1e;">1/3</span>
<span class="t" style="top:756.64px;font-size:12px;color:#1e1e1e;right:1498.4px;-webkit-text-stroke:0.2px #1e1e1e;">#SC</span>
<span class="t" style="top:770.54px;font-size:12px;color:#1e1e1e;right:1498.4px;-webkit-text-stroke:0.2px #1e1e1e;">1295</span>
<span class="t" style="top:756.64px;font-size:12px;color:#1e1e1e;right:1463.2px;-webkit-text-stroke:0.2px #1e1e1e;">LIN</span>
<span class="t" style="top:770.54px;font-size:12px;color:#1e1e1e;right:1463.2px;-webkit-text-stroke:0.2px #1e1e1e;">Som</span>
<span class="t" style="top:756.64px;font-size:12px;color:#1e1e1e;right:1427.8px;-webkit-text-stroke:0.2px #1e1e1e;">ZYG</span>
<span class="t" style="top:770.54px;font-size:12px;color:#1e1e1e;right:1427.8px;-webkit-text-stroke:0.2px #1e1e1e;">-</span>
<span class="t" style="top:756.64px;font-size:12px;color:#1e1e1e;right:1384px;-webkit-text-stroke:0.2px #1e1e1e;">PF(G)</span>
<span class="t" style="top:770.54px;font-size:12px;color:#1e1e1e;right:1384px;-webkit-text-stroke:0.2px #1e1e1e;">-</span>
<span class="t" style="top:756.64px;font-size:12px;color:#1e1e1e;right:1342.4px;-webkit-text-stroke:0.2px #1e1e1e;">PF(E)</span>
<span class="t" style="top:770.54px;font-size:12px;color:#1e1e1e;right:1342.4px;-webkit-text-stroke:0.2px #1e1e1e;">-</span>
<span class="t" style="top:756.64px;font-size:12px;color:#1e1e1e;right:1298.4px;-webkit-text-stroke:0.2px #1e1e1e;">PF(M)</span>
<span class="t" style="top:770.54px;font-size:12px;color:#1e1e1e;right:1298.4px;-webkit-text-stroke:0.2px #1e1e1e;">-</span>
<span class="t" style="top:756.64px;font-size:12px;color:#1e1e1e;right:1249.8px;-webkit-text-stroke:0.2px #1e1e1e;">dbSNP</span>
<span class="t" style="top:770.54px;font-size:12px;color:#1e1e1e;right:1249.8px;-webkit-text-stroke:0.2px #1e1e1e;">Yes</span>
<span class="t" style="top:687.45px;font-size:14px;color:#1c1c1c;-webkit-text-stroke:0.2px #1c1c1c;left:682.2px;width:79.8px;text-align:center;">Effective</span>
<span class="t" style="top:707.65px;font-size:14px;color:#fff;-webkit-text-stroke:0.2px #fff;left:682.2px;width:79.8px;text-align:center;">1 (3)</span>
<span class="t" style="top:687.45px;font-size:14px;color:#1c1c1c;-webkit-text-stroke:0.2px #1c1c1c;left:764.35px;width:79.8px;text-align:center;">Ineffective</span>
<span class="t" style="top:707.65px;font-size:14px;color:#8c9bb6;-webkit-text-stroke:0.2px #8c9bb6;left:764.35px;width:79.8px;text-align:center;">0 (2)</span>
<span class="t" style="top:687.45px;font-size:14px;color:#1c1c1c;-webkit-text-stroke:0.2px #1c1c1c;left:846.5px;width:79.8px;text-align:center;">Safety</span>
<span class="t" style="top:707.65px;font-size:14px;color:#8c9bb6;-webkit-text-stroke:0.2px #8c9bb6;left:846.5px;width:79.8px;text-align:center;">0 (0)</span>
<span class="t" style="top:687.45px;font-size:14px;color:#1c1c1c;-webkit-text-stroke:0.2px #1c1c1c;left:928.65px;width:79.8px;text-align:center;">Prognostic</span>
<span class="t" style="top:707.65px;font-size:14px;color:#8c9bb6;-webkit-text-stroke:0.2px #8c9bb6;left:928.65px;width:79.8px;text-align:center;">0 (0)</span>
<span class="t" style="top:687.45px;font-size:14px;color:#1c1c1c;-webkit-text-stroke:0.2px #1c1c1c;left:1010.8px;width:79.8px;text-align:center;">Diagnostic</span>
<span class="t" style="top:707.65px;font-size:14px;color:#8c9bb6;-webkit-text-stroke:0.2px #8c9bb6;left:1010.8px;width:79.8px;text-align:center;">0 (0)</span>
<span class="t" style="top:685.3px;font-size:15px;color:#444;left:1176.8px;letter-spacing:0.205px;-webkit-text-stroke:0.2px #444;">Likely pathogenic (ACMG)</span>
<span class="t" style="top:711.5px;font-size:15px;color:#444;left:1176.8px;letter-spacing:0.164px;-webkit-text-stroke:0.2px #444;">Uncertain significance</span>
<span class="t" style="top:729.1px;font-size:15px;color:#444;left:1176.8px;letter-spacing:0.257px;-webkit-text-stroke:0.2px #444;">(LOW)</span>
<span class="t" style="top:702.9px;font-size:15px;color:#1d1d1d;left:1396.1000000000001px;letter-spacing:0.184px;-webkit-text-stroke:0.2px #1d1d1d;">User: Likely pathog…</span>
<span class="t" style="top:702.9px;font-size:15px;color:#1d1d1d;left:1622.2px;letter-spacing:0.154px;-webkit-text-stroke:0.2px #1d1d1d;">Included (by filters)</span>
</div></body></html>
